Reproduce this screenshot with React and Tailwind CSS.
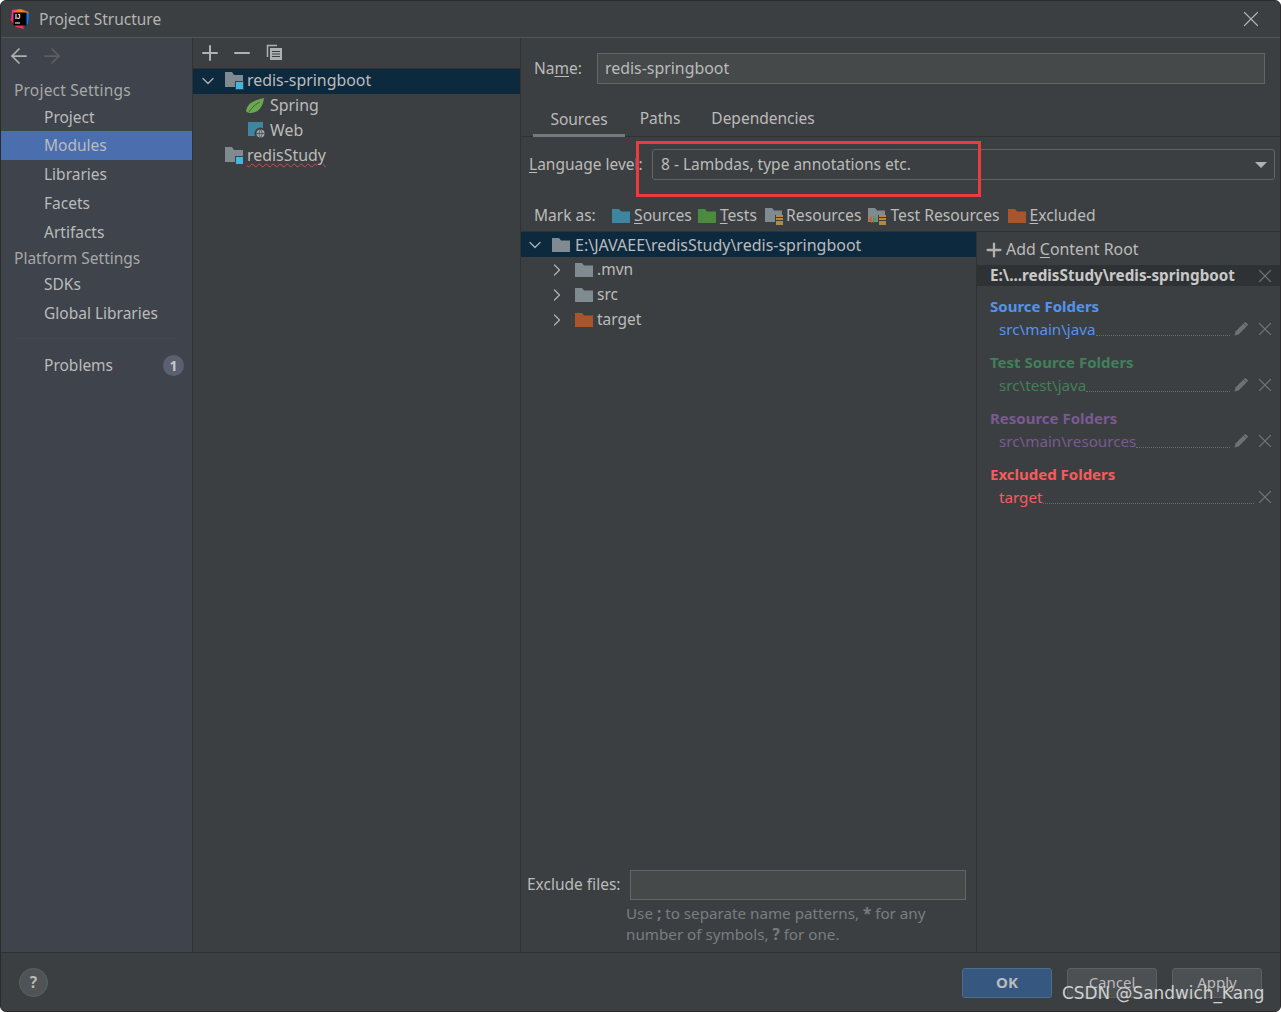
import React from "react";
import { ArrowLeft, ArrowRight, ChevronDown, ChevronRight, Plus, Minus, X } from "lucide-react";

const F = ({ c = "#7f8b91", cls = "" }) => (
  <svg width="18" height="14" viewBox="0 0 18 14" className={`shrink-0 ${cls}`}>
    <path d="M0 0H7L9 2.5H18V14H0Z" fill={c} />
  </svg>
);

const Mod = () => (
  <svg width="20" height="18" viewBox="0 0 20 18" className="shrink-0">
    <path d="M0 0H7L9 3H18V15H0Z" fill="#7f8b91" />
    <rect x="10" y="9" width="9" height="9" fill="#3d3f41" />
    <rect x="11" y="10" width="7" height="7" fill="#40b6e0" />
  </svg>
);

const Res = ({ test }) => (
  <svg width="20" height="18" viewBox="0 0 20 18" className="shrink-0">
    <path d="M0 1H7L9 3.500H17V15H0Z" fill="#7f8b91" />
    <rect x="10" y="8" width="10" height="10" fill="#3c3f41" />
    <path d="M11 9H18M11 12H18M11 15H18M11 17H18" stroke="#d9a343" strokeWidth="1.500" />
    {test && <path d="M9 12.500L5 9V16Z" fill="#499c54" />}
    {test && <path d="M0 12.500L4 9V16Z" fill="#e05a24" />}
  </svg>
);

const Pencil = () => (
  <svg width="14" height="14" viewBox="0 0 14 14" className="shrink-0">
    <path d="M0.500 13.500L1.500 9.500L9.500 1.500L12.500 4.500L4.500 12.500Z" fill="#6e7275" />
    <path d="M10.500 0.500L13.500 3.500" stroke="#6e7275" strokeWidth="2" />
  </svg>
);

const Mn = ({ children }) => <span className="underline underline-offset-2 decoration-1">{children}</span>;

const NavItem = ({ children, active, h = "h-[29px]" }) => (
  <div className={`${h} flex items-center pl-[43px] ${active ? "bg-[#4b6eaf]" : ""}`}>{children}</div>
);

const Root = ({ label, color, path, pencil = true }) => (
  <div className="flex flex-col">
    <div className="h-[22px] pl-[13px] flex items-center font-bold text-[15px]" style={{ color }}>{label}</div>
    <div className="h-[22px] mt-[1px] pl-[22px] pr-[4px] flex items-center" style={{ color }}>
      <span className="text-[15.200px] shrink-0">{path}</span>
      <span className="flex-1 self-end mb-[4px] border-b border-dotted border-[#6a6d70]" />
      {pencil && <span className="ml-[4px] mr-[6px]"><Pencil /></span>}
      <X size={22} strokeWidth={1.250} className="text-[#6e7275] shrink-0" />
    </div>
  </div>
);

export default function App() {
  return (
    <div
      className="relative w-[1281px] h-[1012px] bg-[#3c3f41] text-[#bbbbbb] text-[15.500px] border border-[#2b2b2b] rounded-[6px] overflow-hidden flex flex-col"
      style={{ fontFamily: '"Noto Sans", "Open Sans", "Liberation Sans", sans-serif' }}
    >
      {/* Title bar */}
      <div className="h-[37px] shrink-0 flex items-center border-b border-[#555555] pl-[9px] pr-[16px] bg-[#3c3f41]">
        <svg width="20" height="20" viewBox="0 0 20 20" className="shrink-0">
          <path d="M2 1L9 0L8 8L1 12Z" fill="#fc318c" />
          <path d="M11 0L19 4L18 15L12 18Z" fill="#087cfa" />
          <path d="M0 10L6 18L14 20L10 8Z" fill="#fe2857" />
          <path d="M3 3L10 0L19 3L10 8Z" fill="#f97a12" />
          <rect x="3.500" y="3.500" width="13" height="13" fill="#000" />
          <text x="5" y="10" fontSize="6.500" fontWeight="700" fill="#fff" fontFamily="Liberation Sans">IJ</text>
          <rect x="5" y="13.500" width="5" height="1" fill="#fff" />
        </svg>
        <span className="ml-[9px] pt-[2px] text-[#b4b4b4]">Project Structure</span>
        <X size={26} strokeWidth={1.100} className="ml-auto text-[#afb1b3]" />
      </div>

      <div className="flex flex-1 min-h-0">
        {/* Sidebar */}
        <div className="w-[192px] shrink-0 bg-[#3e434c] border-r border-[#323232] flex flex-col">
          <div className="h-[35px] pl-[6px] flex items-center gap-[9px]">
            <ArrowLeft size={24} strokeWidth={1.750} className="text-[#afb1b3]" />
            <ArrowRight size={24} strokeWidth={1.750} className="text-[#5c5f63]" />
          </div>
          <div className="h-[32px] pt-[4px] pl-[13px] flex items-center text-[#a8a8a8] tracking-[0.2px]">Project Settings</div>
          <NavItem h="h-[26px]">Project</NavItem>
          <NavItem active>Modules</NavItem>
          <NavItem>Libraries</NavItem>
          <NavItem>Facets</NavItem>
          <NavItem>Artifacts</NavItem>
          <div className="h-[24px] pl-[13px] flex items-center text-[#a8a8a8]">Platform Settings</div>
          <NavItem h="h-[28px]">SDKs</NavItem>
          <NavItem>Global Libraries</NavItem>
          <div className="mx-[15px] mt-[10px] border-t border-[#46494f]" />
          <div className="h-[24px] mt-[15px] pl-[43px] pr-[8px] flex items-center justify-between">
            Problems
            <span className="w-[21px] h-[21px] -mt-[1px] rounded-full bg-[#5a6070] text-[#c8c8c8] text-[14px] font-bold flex items-center justify-center">1</span>
          </div>
        </div>

        {/* Module tree */}
        <div className="w-[328px] shrink-0 border-r border-[#323232] flex flex-col text-[15.900px]">
          <div className="h-[31px] shrink-0 pl-[5px] pb-[1px] flex items-center border-b border-[#323232]">
            <Plus size={24} strokeWidth={2} className="text-[#afb1b3]" />
            <Minus size={24} strokeWidth={2} className="text-[#afb1b3] ml-[8px]" />
            <svg width="17" height="17" viewBox="0 0 17 17" className="ml-[12px]">
              <path d="M1.500 13V1.500H11" fill="none" stroke="#afb1b3" strokeWidth="1.500" />
              <rect x="4" y="4" width="12" height="12" fill="#afb1b3" />
              <path d="M6 7.500H14M6 10H14M6 12.500H14" stroke="#3c3f41" strokeWidth="1" />
            </svg>
          </div>
          <div className="h-[25px] pb-[2px] bg-[#0d293e] flex items-center pl-[5px]">
            <ChevronDown size={20} strokeWidth={1.500} className="text-[#afb1b3] shrink-0" />
            <span className="ml-[7px]"><Mod /></span>
            <span className="ml-[2px]">redis-springboot</span>
          </div>
          <div className="h-[25px] pb-[2px] flex items-center pl-[53px]">
            <svg width="18" height="16" viewBox="0 0 18 16" className="shrink-0">
              <path d="M0 13C1 6 8 2 18 0C17 9 12 15 5 15C3 15 1 14.500 0 13Z" fill="#6aa84f" />
              <path d="M3 14C6 9 10 6 14 4" stroke="#3c3f41" strokeWidth="0.700" fill="none" />
            </svg>
            <span className="ml-[6px]">Spring</span>
          </div>
          <div className="h-[25px] pb-[2px] flex items-center pl-[55px]">
            <svg width="18" height="17" viewBox="0 0 18 17" className="shrink-0">
              <rect width="15" height="14" fill="#3e86a0" />
              <circle cx="12.500" cy="11.500" r="6" fill="#3c3f41" />
              <circle cx="12.500" cy="11.500" r="4" fill="#9aa7b0" />
              <path d="M8.500 11.500H16.500M12.500 7.500C10.500 10 10.500 13 12.500 15.500C14.500 13 14.500 10 12.500 7.500" stroke="#3c3f41" strokeWidth="0.700" fill="none" />
            </svg>
            <span className="ml-[4px]">Web</span>
          </div>
          <div className="h-[25px] pb-[2px] flex items-center pl-[32px]">
            <Mod />
            <span className="ml-[2px] underline decoration-wavy decoration-[#c94f4f] decoration-1 underline-offset-2">redisStudy</span>
          </div>
        </div>

        {/* Editor */}
        <div className="flex-1 min-w-0 flex flex-col">
          <div className="h-[31px] mt-[15px] pl-[13px] pr-[15px] flex items-center shrink-0">
            <span className="w-[63px] shrink-0">Na<Mn>m</Mn>e:</span>
            <div className="flex-1 h-[31px] bg-[#45494a] border border-[#646464] px-[7px] flex items-center text-[15.900px]">redis-springboot</div>
          </div>
          <div className="h-[52px] mt-[1px] shrink-0 flex items-end pl-[12px] border-b border-[#323232]">
            <div className="h-[36px] w-[92px] pt-[5px] flex items-center justify-center border-b-[3px] border-[#747a80] -mb-[1px]">Sources</div>
            <div className="h-[36px] w-[70px] pt-[5px] pb-[3px] flex items-center justify-center">Paths</div>
            <div className="h-[36px] w-[136px] pt-[5px] pb-[3px] flex items-center justify-center">Dependencies</div>
          </div>
          <div className="h-[31px] mt-[12px] shrink-0 pl-[8px] pr-[5px] flex items-center">
            <span className="w-[123px] shrink-0"><Mn>L</Mn>anguage level:</span>
            <div className="flex-1 h-[31px] bg-[#3c3f41] border border-[#646464] rounded-[3px] pl-[8px] pr-[7px] flex items-center justify-between">
              8 - Lambdas, type annotations etc.
              <svg width="12" height="6" viewBox="0 0 12 6"><path d="M0 0H12L6 6Z" fill="#afb1b3" /></svg>
            </div>
          </div>
          <div className="h-[28px] mt-[21px] mb-[2px] pt-[2px] shrink-0 pl-[13px] flex items-center">
            <span className="w-[78px] shrink-0">Mark as:</span>
            <F c="#3e86a0" /><span className="ml-[4px] mr-[6px] text-[15.700px]"><Mn>S</Mn>ources</span>
            <F c="#4c8a3f" /><span className="ml-[4px] mr-[8px] text-[15.700px]"><Mn>T</Mn>ests</span>
            <Res /><span className="ml-[1px] mr-[7px] text-[15.700px]">Resources</span>
            <Res test /><span className="ml-[2px] mr-[8px] text-[15.700px]">Test Resources</span>
            <F c="#a8552c" /><span className="ml-[4px] text-[15.700px]"><Mn>E</Mn>xcluded</span>
          </div>

          <div className="flex-1 min-h-0 flex">
            {/* content tree */}
            <div className="w-[456px] shrink-0 border-r border-[#323232] border-t flex flex-col">
              <div className="h-[25px] bg-[#0d293e] flex items-center pl-[4px] text-[16px]">
                <ChevronDown size={20} strokeWidth={1.500} className="text-[#afb1b3] shrink-0" />
                <F cls="ml-[7px]" />
                <span className="ml-[5px]">E:\JAVAEE\redisStudy\redis-springboot</span>
              </div>
              {[[".mvn", "#7f8b91"], ["src", "#7f8b91"], ["target", "#a8552c"]].map(([n, c]) => (
                <div key={n} className="h-[25px] flex items-center pl-[26px]">
                  <ChevronRight size={20} strokeWidth={1.500} className="text-[#afb1b3] shrink-0" />
                  <F c={c} cls="ml-[8px]" />
                  <span className="ml-[4px]">{n}</span>
                </div>
              ))}
              <div className="flex-1" />
              <div className="h-[30px] pl-[6px] pr-[10px] flex items-center">
                <span className="w-[103px] shrink-0">Exclude files:</span>
                <div className="flex-1 h-[30px] bg-[#45494a] border border-[#646464]" />
              </div>
              <div className="h-[52px] pt-[3px] pl-[105px] text-[#7a7d80] leading-[21px] text-[15.200px]">
                Use <b>;</b> to separate name patterns, <b>*</b> for any<br />number of symbols, <b>?</b> for one.
              </div>
            </div>

            {/* roots */}
            <div className="flex-1 min-w-0 border-t border-[#323232] flex flex-col">
              <div className="h-[33px] pl-[6px] pt-[3px] flex items-center">
                <Plus size={22} strokeWidth={2.500} className="text-[#afb1b3] shrink-0" />
                <span className="ml-[1px] text-[15.900px]">Add <Mn>C</Mn>ontent Root</span>
              </div>
              <div className="h-[21px] bg-[#2f3234] pl-[13px] pr-[4px] flex items-center justify-between font-bold text-[15.250px] text-[#c8c8c8]">
                E:\...redisStudy\redis-springboot
                <X size={22} strokeWidth={1.250} className="text-[#6e7275]" />
              </div>
              <div className="mt-[9px] flex flex-col gap-[11px]">
                <Root label="Source Folders" color="#5394ec" path="src\main\java" />
                <Root label="Test Source Folders" color="#41805a" path="src\test\java" />
                <Root label="Resource Folders" color="#7a5a92" path="src\main\resources" />
                <Root label="Excluded Folders" color="#f75c5c" path="target" pencil={false} />
              </div>
            </div>
          </div>
        </div>
      </div>

      {/* Footer */}
      <div className="h-[59px] shrink-0 border-t border-[#2f3133] flex items-center pl-[18px] pr-[18px]">
        <span className="w-[29px] h-[29px] mt-[1px] rounded-full bg-[#4f5355] border border-[#5e6163] text-[#b8b8b8] font-bold flex items-center justify-center">?</span>
        <div className="ml-auto flex gap-[15px] text-[15px] font-bold mt-[1px]">
          <div className="w-[90px] h-[30px] rounded-[3px] bg-[#365880] border border-[#4c708c] text-[#bbbbbb] flex items-center justify-center">OK</div>
          <div className="w-[90px] h-[30px] rounded-[3px] bg-[#4c5052] border border-[#5e6060] font-normal flex items-center justify-center">Cancel</div>
          <div className="w-[90px] h-[30px] rounded-[3px] bg-[#4c5052] border border-[#5e6060] font-normal flex items-center justify-center">Apply</div>
        </div>
      </div>

      {/* Annotation + watermark overlays */}
      <div className="absolute left-[635px] top-[140px] w-[345px] h-[56px] border-[3px] border-[#ee3a3a]" />
      <div className="absolute left-[1061px] top-[981px] text-[#d0d0d0] text-[16.900px] leading-[22px] whitespace-nowrap" style={{ fontFamily: '"DejaVu Sans", sans-serif' }}>CSDN @Sandwich_Kang</div>
    </div>
  );
}
